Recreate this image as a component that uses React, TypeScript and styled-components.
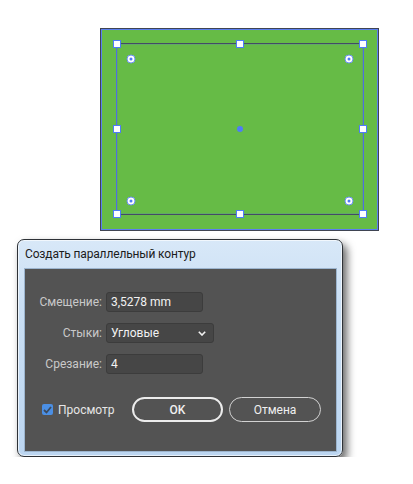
import React from "react";
import styled, { createGlobalStyle } from "styled-components";

const GlobalStyle = createGlobalStyle`
  body {
    margin: 0;
    background: #ffffff;
    font-family: Roboto, "Liberation Sans", sans-serif;
  }
`;

const Page = styled.div`
  display: flex;
  flex-direction: column;
  align-items: flex-start;
  gap: 8px;
  padding-top: 28px;
`;

/* canvas: green rectangle with its selection frame */
const Artboard = styled.div`
  margin-left: 100px;
  width: 279px;
  height: 203px;
  box-sizing: border-box;
  padding: 14px 0 0 15px;
  background: #66bb46;
  border: 1px solid #3f4452;
  box-shadow: inset 1px -1px 0 #5b7ff0, inset -1px 1px 0 #5b7ff0;
`;

const Selection = styled.div`
  position: relative;
  width: 248px;
  height: 172px;
  box-sizing: border-box;
  border-top: 1px solid #444a66;
  border-bottom: 1px solid #444a66;
  border-left: 1px solid #4f6fe0;
  border-right: 1px solid #4f6fe0;
  box-shadow: inset 0 0 0 0.5px rgba(79, 111, 224, 0.4);
`;

const Handle = styled.span<{ $x: string; $y: string }>`
  position: absolute;
  left: ${(p) => p.$x};
  top: ${(p) => p.$y};
  width: 8px;
  height: 8px;
  box-sizing: border-box;
  transform: translate(-50%, -50%);
  background: #ffffff;
  border: 1px solid #4f7cf7;
`;

const CornerWidget = styled.span<{ $x: string; $y: string }>`
  position: absolute;
  left: ${(p) => p.$x};
  top: ${(p) => p.$y};
  width: 9px;
  height: 9px;
  box-sizing: border-box;
  transform: translate(-50%, -50%);
  border-radius: 50%;
  background: #ffffff;
  border: 1.5px solid #6b8ff5;
  display: flex;
  align-items: center;
  justify-content: center;

  &::after {
    content: "";
    width: 3px;
    height: 3px;
    border-radius: 50%;
    background: #4f7cf7;
  }
`;

const CenterPoint = styled.span`
  position: absolute;
  left: 50%;
  top: 50%;
  width: 6px;
  height: 6px;
  transform: translate(-50%, -50%);
  border-radius: 50%;
  background: #4f7cf7;
`;

/* dialog window */
const Window = styled.div`
  margin-left: 17px;
  width: 326px;
  box-sizing: border-box;
  padding: 0 5px 4px 6px;
  border: 1px solid #2e3237;
  border-radius: 7px;
  background: linear-gradient(
    180deg,
    #d8e8f8 0%,
    #cadff4 30%,
    #bcd6f1 100%
  );
  box-shadow: inset 0 0 0 1px rgba(255, 255, 255, 0.65),
    4px 5px 9px rgba(0, 0, 0, 0.6);
`;

const TitleBar = styled.div`
  height: 28px;
  display: flex;
  align-items: center;
  padding-left: 1px;
  font-size: 12px;
  letter-spacing: -0.15px;
  color: #1c1c1c;
`;

const Panel = styled.div`
  background: #535353;
  border: 1px solid #9cb5cf;
  padding: 23px 15px 29px 16px;
`;

const Form = styled.div`
  display: grid;
  grid-template-columns: 61px auto;
  column-gap: 4px;
  row-gap: 11px;
  align-items: center;
  justify-items: start;
`;

const Label = styled.span`
  justify-self: end;
  font-size: 12px;
  color: #c9c9c9;
  white-space: nowrap;
`;

const Field = styled.div<{ $width: number }>`
  width: ${(p) => p.$width}px;
  height: 20px;
  box-sizing: border-box;
  display: flex;
  align-items: center;
  justify-content: space-between;
  padding: 0 7px 0 4px;
  background: #464646;
  border: 1px solid #3c3c3c;
  border-radius: 3px;
  font-size: 12px;
  color: #f2f2f2;
`;

const Footer = styled.div`
  display: flex;
  align-items: center;
  margin-top: 23px;
`;

const Check = styled.label`
  display: flex;
  align-items: center;
  gap: 5px;
  margin-left: 1px;
  font-size: 12px;
  color: #e6e6e6;
`;

const Box = styled.span`
  width: 11px;
  height: 11px;
  border-radius: 2px;
  background: #4b8fe4;
  display: flex;
  align-items: center;
  justify-content: center;
`;

const Buttons = styled.div`
  display: flex;
  gap: 6px;
  margin-left: auto;
`;

const Button = styled.button<{ $primary?: boolean; $width: number }>`
  width: ${(p) => p.$width}px;
  height: 25px;
  box-sizing: border-box;
  border-radius: 13px;
  background: transparent;
  border: ${(p) => (p.$primary ? "2px solid #ececec" : "1.5px solid #d2d2d2")};
  font-family: inherit;
  font-size: 12px;
  font-weight: ${(p) => (p.$primary ? 500 : 400)};
  color: #f0f0f0;
  padding: 0;
`;

const handles: [string, string][] = [
  ["0%", "0%"],
  ["50%", "0%"],
  ["100%", "0%"],
  ["0%", "50%"],
  ["100%", "50%"],
  ["0%", "100%"],
  ["50%", "100%"],
  ["100%", "100%"],
];

const widgets: [string, string][] = [
  ["14px", "15px"],
  ["calc(100% - 14px)", "15px"],
  ["14px", "calc(100% - 13px)"],
  ["calc(100% - 14px)", "calc(100% - 13px)"],
];

export default function App() {
  return (
    <>
      <GlobalStyle />
      <Page>
        <Artboard>
          <Selection>
            {widgets.map(([x, y]) => (
              <CornerWidget key={x + y} $x={x} $y={y} />
            ))}
            <CenterPoint />
            {handles.map(([x, y]) => (
              <Handle key={x + y} $x={x} $y={y} />
            ))}
          </Selection>
        </Artboard>

        <Window>
          <TitleBar>Создать параллельный контур</TitleBar>
          <Panel>
            <Form>
              <Label>Смещение:</Label>
              <Field $width={97}>3,5278 mm</Field>
              <Label>Стыки:</Label>
              <Field $width={108}>
                Угловые
                <svg width="8" height="5" viewBox="0 0 8 5">
                  <polyline
                    points="0.8,0.8 4,4 7.2,0.8"
                    fill="none"
                    stroke="#f2f2f2"
                    strokeWidth="1.6"
                  />
                </svg>
              </Field>
              <Label>Срезание:</Label>
              <Field $width={97}>4</Field>
            </Form>
            <Footer>
              <Check>
                <Box>
                  <svg width="9" height="8" viewBox="0 0 9 8">
                    <polyline
                      points="1,4 3.5,6.5 8,1"
                      fill="none"
                      stroke="#3b4a5e"
                      strokeWidth="1.8"
                    />
                  </svg>
                </Box>
                Просмотр
              </Check>
              <Buttons>
                <Button $primary $width={91}>
                  OK
                </Button>
                <Button $width={92}>Отмена</Button>
              </Buttons>
            </Footer>
          </Panel>
        </Window>
      </Page>
    </>
  );
}
